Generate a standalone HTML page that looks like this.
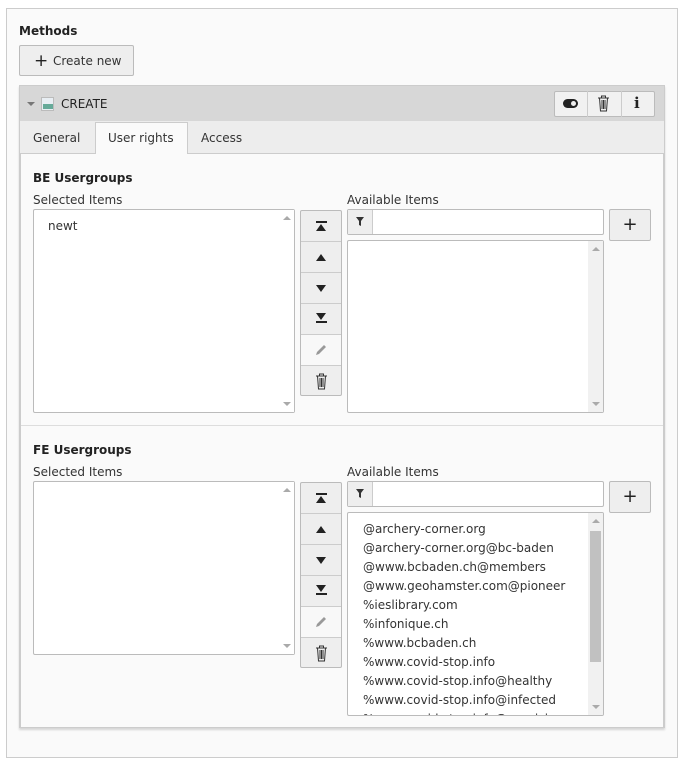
<!DOCTYPE html>
<html><head><style>
*{box-sizing:border-box;margin:0;padding:0}
body{width:683px;height:764px;background:#fff;font-family:"DejaVu Sans","Liberation Sans",sans-serif;font-size:12px;color:#333;position:relative;overflow:hidden}
.a{position:absolute}
.outer{left:6px;top:8px;width:672px;height:750px;border:1px solid #ccc;background:#fafafa}
.btn{background:#eee;border:1px solid #bbb;border-radius:2px}
.list{background:#fff;border:1px solid #bbb;border-radius:2px}
.sb{position:absolute;right:0;top:0;bottom:0;width:15px;background:#f1f1f1}
.up,.dn{position:absolute;left:4px;width:0;height:0;border-left:4px solid transparent;border-right:4px solid transparent}
.up{top:6px;border-bottom:4px solid #aaa}
.dn{bottom:6px;border-top:4px solid #aaa}
.vb{left:300px;width:42px;border:1px solid #bbb;border-radius:2px;background:#eee}
.vb>div{height:31px;border-bottom:1px solid #ccc;position:relative}
.vb>div:last-child{border-bottom:none}
.tri{position:absolute;left:15px;width:0;height:0;border-left:5.5px solid transparent;border-right:5.5px solid transparent}
.bar{position:absolute;left:15px;width:11px;height:2px;background:#222}
.items div{height:19px;line-height:19px;padding-left:15px}
.t{margin-top:1px}
</style></head><body>
<div class="a outer"></div>
<div class="a" style="left:19px;top:24px;font-weight:bold;color:#222">Methods</div>
<div class="a btn" style="left:19px;top:45px;width:115px;height:31px;line-height:30px;padding-left:33px;color:#333">Create new</div>
<div class="a" style="left:34px;top:54px;font-size:17px;line-height:14px;color:#222">+</div>
<div class="a" style="left:19px;top:85px;width:646px;height:643px;border:1px solid #ccc;background:#fafafa;box-shadow:0 2px 2px rgba(0,0,0,.15)"></div>
<div class="a" style="left:20px;top:86px;width:644px;height:35px;background:#d7d7d7"></div>
<div class="a" style="left:27px;top:102px;border-left:4px solid transparent;border-right:4px solid transparent;border-top:4px solid #777"></div>
<div class="a" style="left:41px;top:97px;width:13px;height:14px;background:#e8eef3;border:1px solid #bbb"><div style="position:absolute;left:1px;bottom:1px;width:10px;height:5px;background:#6a9"></div></div>
<div class="a" style="left:61px;top:97px;color:#222">CREATE</div>
<div class="a btn" style="left:554px;top:91px;width:101px;height:26px;background:#f1f1f1"></div>
<div class="a" style="left:587px;top:91px;width:1px;height:26px;background:#ccc"></div>
<div class="a" style="left:621px;top:91px;width:1px;height:26px;background:#ccc"></div>
<div class="a" style="left:563px;top:99px;width:15px;height:9px;border-radius:5px;background:#222"><div style="position:absolute;right:2px;top:2px;width:5px;height:5px;border-radius:3px;background:#eee"></div></div>
<svg class="a" style="left:597px;top:95px" width="13" height="17" viewBox="0 0 13 17"><path d="M1 3h11M4.5 3V1h4v2M2.5 3l1 13h6l1-13M5 5v9M6.5 5v9M8 5v9" stroke="#333" stroke-width="1" fill="none"/></svg>
<div class="a" style="left:634px;top:94px;font-weight:bold;font-size:15px;color:#222;font-family:'DejaVu Serif',serif">i</div>
<div class="a" style="left:20px;top:121px;width:644px;height:33px;background:#ededed;border-bottom:1px solid #ccc"></div>
<div class="a" style="left:33px;top:131px">General</div>
<div class="a" style="left:95px;top:122px;width:93px;height:32px;background:#fafafa;border:1px solid #ccc;border-bottom:none"></div>
<div class="a" style="left:108px;top:131px">User rights</div>
<div class="a" style="left:201px;top:131px">Access</div>
<div class="a" style="left:20px;top:153px;width:1px;height:574px;background:#ccc"></div>
<div class="a" style="left:663px;top:153px;width:1px;height:574px;background:#ccc"></div>
<div class="a" style="left:33px;top:171px;font-weight:bold;color:#222">BE Usergroups</div>
<div class="a" style="left:33px;top:193px">Selected Items</div>
<div class="a" style="left:347px;top:193px">Available Items</div>
<div class="a list" style="left:33px;top:209px;width:262px;height:204px"><div class="sb" style="background:#fff"><div class="up"></div><div class="dn"></div></div><div style="padding:9px 14px;color:#333">newt</div></div>
<div class="a vb" style="top:210px;height:186px">
<div><div class="bar" style="top:10px"></div><div class="tri" style="top:13px;border-bottom:7px solid #222"></div></div>
<div><div class="tri" style="top:12px;border-bottom:7px solid #222"></div></div>
<div><div class="tri" style="top:12px;border-top:7px solid #222"></div></div>
<div><div class="tri" style="top:9px;border-top:7px solid #222"></div><div class="bar" style="top:17px"></div></div>
<div style="background:#f8f8f8"><svg style="position:absolute;left:13px;top:8px" width="14" height="14"><path d="M2 12l1-3 7-7 2 2-7 7z" fill="#999"/></svg></div>
<div><svg style="position:absolute;left:14px;top:7px" width="13" height="17" viewBox="0 0 13 17"><path d="M1 3h11M4.5 3V1h4v2M2.5 3l1 13h6l1-13M5 5v9M6.5 5v9M8 5v9" stroke="#333" stroke-width="1" fill="none"/></svg></div>
</div>
<div class="a" style="left:347px;top:209px;width:257px;height:26px;border:1px solid #bbb;border-radius:2px;background:#fff"><div style="width:25px;height:24px;background:#eee;border-right:1px solid #ccc;position:relative"><svg style="position:absolute;left:8px;top:7px" width="9" height="9"><path d="M0 0h8L5 4v5L3 8V4z" fill="#333"/></svg></div></div>
<div class="a btn" style="left:609px;top:209px;width:42px;height:32px;text-align:center;line-height:30px;font-size:18px;color:#222">+</div>
<div class="a list" style="left:347px;top:240px;width:257px;height:173px"><div class="sb"><div class="up"></div><div class="dn"></div></div></div>
<div class="a" style="left:21px;top:425px;width:642px;height:1px;background:#ddd"></div>
<div class="a" style="left:33px;top:443px;font-weight:bold;color:#222">FE Usergroups</div>
<div class="a" style="left:33px;top:465px">Selected Items</div>
<div class="a" style="left:347px;top:465px">Available Items</div>
<div class="a list" style="left:33px;top:481px;width:262px;height:174px"><div class="sb" style="background:#fff"><div class="up"></div><div class="dn"></div></div></div>
<div class="a vb" style="top:482px;height:186px">
<div><div class="bar" style="top:10px"></div><div class="tri" style="top:13px;border-bottom:7px solid #222"></div></div>
<div><div class="tri" style="top:12px;border-bottom:7px solid #222"></div></div>
<div><div class="tri" style="top:12px;border-top:7px solid #222"></div></div>
<div><div class="tri" style="top:9px;border-top:7px solid #222"></div><div class="bar" style="top:17px"></div></div>
<div style="background:#f8f8f8"><svg style="position:absolute;left:13px;top:8px" width="14" height="14"><path d="M2 12l1-3 7-7 2 2-7 7z" fill="#999"/></svg></div>
<div><svg style="position:absolute;left:14px;top:7px" width="13" height="17" viewBox="0 0 13 17"><path d="M1 3h11M4.5 3V1h4v2M2.5 3l1 13h6l1-13M5 5v9M6.5 5v9M8 5v9" stroke="#333" stroke-width="1" fill="none"/></svg></div>
</div>
<div class="a" style="left:347px;top:481px;width:257px;height:26px;border:1px solid #bbb;border-radius:2px;background:#fff"><div style="width:25px;height:24px;background:#eee;border-right:1px solid #ccc;position:relative"><svg style="position:absolute;left:8px;top:7px" width="9" height="9"><path d="M0 0h8L5 4v5L3 8V4z" fill="#333"/></svg></div></div>
<div class="a btn" style="left:609px;top:481px;width:42px;height:32px;text-align:center;line-height:30px;font-size:18px;color:#222">+</div>
<div class="a list" style="left:347px;top:512px;width:257px;height:204px;overflow:hidden"><div class="sb"><div class="up"></div><div class="dn"></div><div style="position:absolute;left:2px;top:18px;width:11px;height:131px;background:#c1c1c1"></div></div>
<div class="items" style="padding-top:7px">
<div>@archery-corner.org</div><div>@archery-corner.org@bc-baden</div><div>@www.bcbaden.ch@members</div><div>@www.geohamster.com@pioneer</div><div>%ieslibrary.com</div><div>%infonique.ch</div><div>%www.bcbaden.ch</div><div>%www.covid-stop.info</div><div>%www.covid-stop.info@healthy</div><div>%www.covid-stop.info@infected</div><div>%www.covid-stop.info@suspicious</div>
</div></div>
</body></html>
